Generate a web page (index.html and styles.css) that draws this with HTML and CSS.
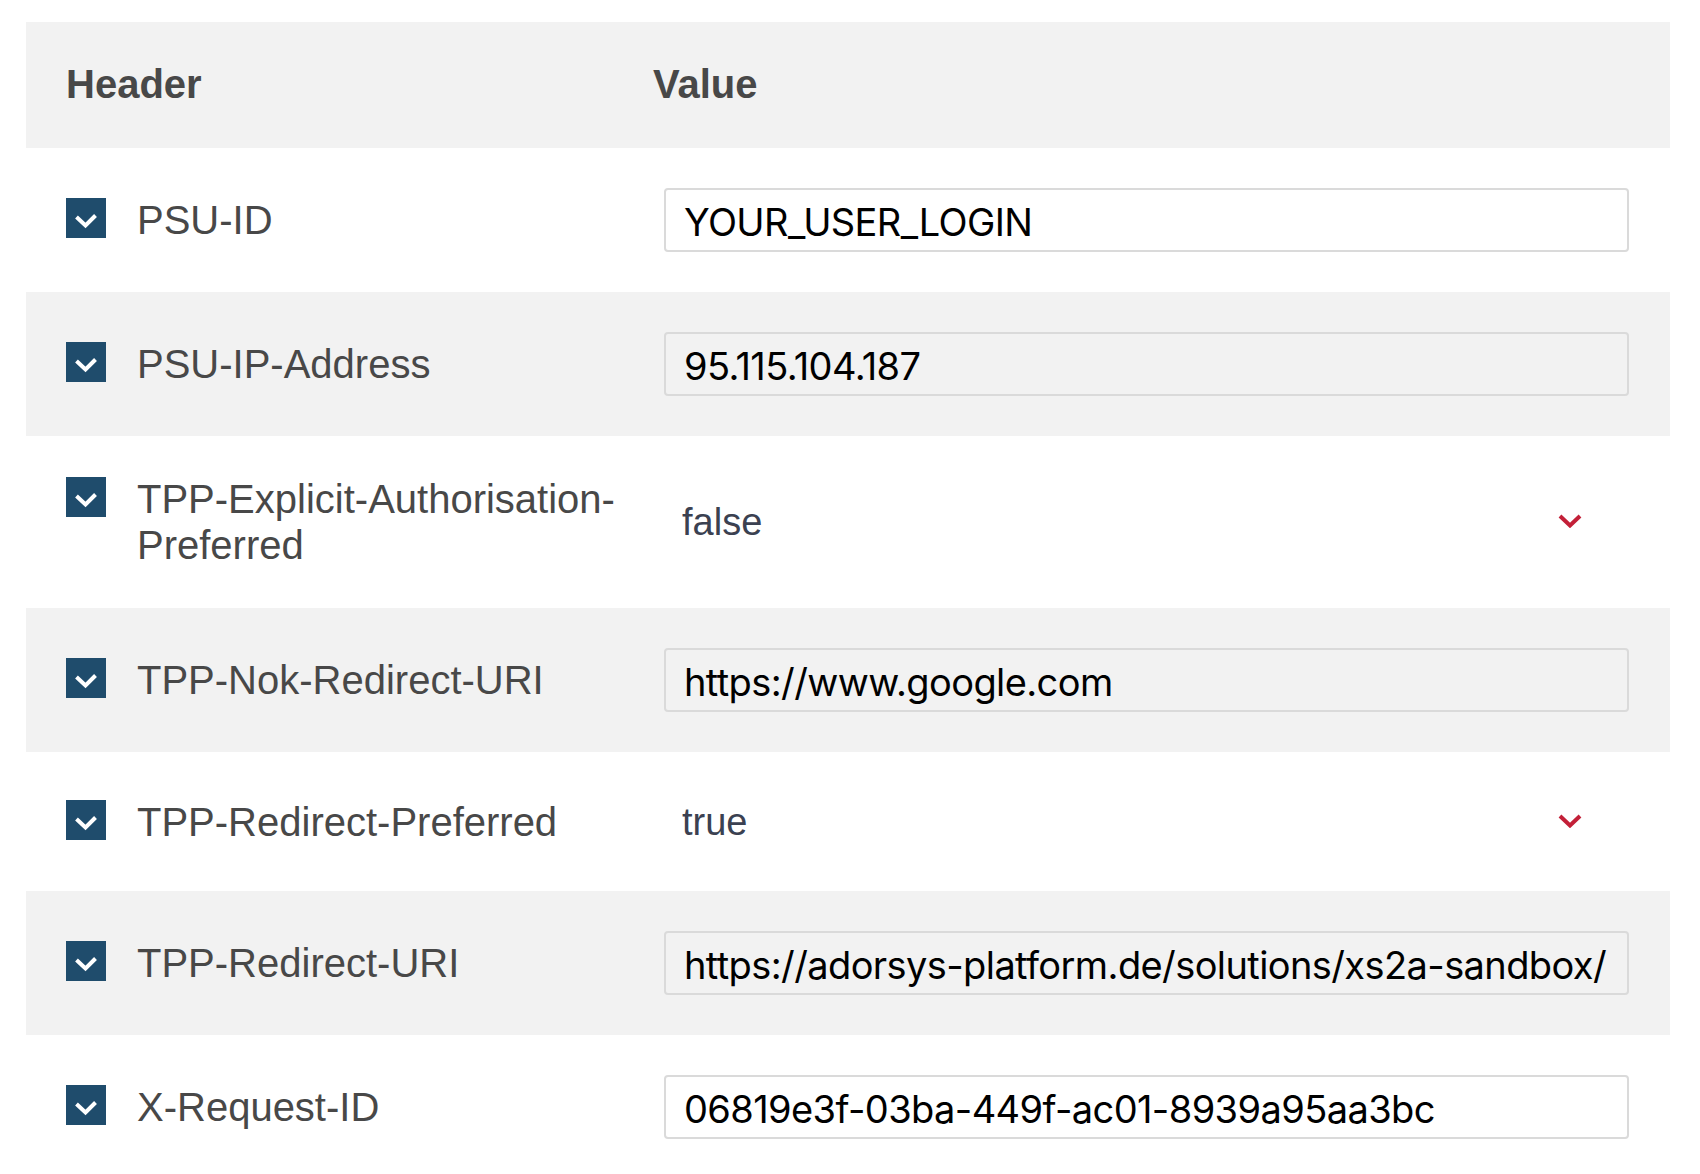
FILE: index.html
```html
<!DOCTYPE html>
<html lang="en">
<head>
<meta charset="utf-8">
<title>Headers</title>
<link rel="stylesheet" href="styles.css">
</head>
<body>
<div class="table">
  <div class="row head">
    <div class="th">Header</div>
    <div class="th th-value">Value</div>
  </div>

  <div class="row">
    <div class="name">
      <span class="cb"><svg viewBox="0 0 40 40" width="40" height="40"><polyline points="10.5,19 19.5,27.5 29.5,17.5" fill="none" stroke="#fff" stroke-width="4"/></svg></span>
      <span class="label">PSU-ID</span>
    </div>
    <div class="val"><input class="text" type="text" value="YOUR_USER_LOGIN"></div>
  </div>

  <div class="row">
    <div class="name">
      <span class="cb"><svg viewBox="0 0 40 40" width="40" height="40"><polyline points="10.5,19 19.5,27.5 29.5,17.5" fill="none" stroke="#fff" stroke-width="4"/></svg></span>
      <span class="label">PSU-IP-Address</span>
    </div>
    <div class="val"><input class="text" type="text" value="95.115.104.187"></div>
  </div>

  <div class="row">
    <div class="name">
      <span class="cb"><svg viewBox="0 0 40 40" width="40" height="40"><polyline points="10.5,19 19.5,27.5 29.5,17.5" fill="none" stroke="#fff" stroke-width="4"/></svg></span>
      <span class="label">TPP-Explicit-Authorisation-Preferred</span>
    </div>
    <div class="val select-wrap">
      <select class="sel"><option>false</option><option>true</option></select>
      <svg class="chev" viewBox="0 0 24 14" width="24" height="14"><polyline points="2,2 12,11.5 22,2" fill="none" stroke="#c32038" stroke-width="4"/></svg>
    </div>
  </div>

  <div class="row">
    <div class="name">
      <span class="cb"><svg viewBox="0 0 40 40" width="40" height="40"><polyline points="10.5,19 19.5,27.5 29.5,17.5" fill="none" stroke="#fff" stroke-width="4"/></svg></span>
      <span class="label">TPP-Nok-Redirect-URI</span>
    </div>
    <div class="val"><input class="text" type="text" value="https://www.google.com"></div>
  </div>

  <div class="row">
    <div class="name">
      <span class="cb"><svg viewBox="0 0 40 40" width="40" height="40"><polyline points="10.5,19 19.5,27.5 29.5,17.5" fill="none" stroke="#fff" stroke-width="4"/></svg></span>
      <span class="label">TPP-Redirect-Preferred</span>
    </div>
    <div class="val select-wrap">
      <select class="sel"><option>true</option><option>false</option></select>
      <svg class="chev" viewBox="0 0 24 14" width="24" height="14"><polyline points="2,2 12,11.5 22,2" fill="none" stroke="#c32038" stroke-width="4"/></svg>
    </div>
  </div>

  <div class="row">
    <div class="name">
      <span class="cb"><svg viewBox="0 0 40 40" width="40" height="40"><polyline points="10.5,19 19.5,27.5 29.5,17.5" fill="none" stroke="#fff" stroke-width="4"/></svg></span>
      <span class="label">TPP-Redirect-URI</span>
    </div>
    <div class="val"><input class="text" type="text" value="https://adorsys-platform.de/solutions/xs2a-sandbox/"></div>
  </div>

  <div class="row">
    <div class="name">
      <span class="cb"><svg viewBox="0 0 40 40" width="40" height="40"><polyline points="10.5,19 19.5,27.5 29.5,17.5" fill="none" stroke="#fff" stroke-width="4"/></svg></span>
      <span class="label">X-Request-ID</span>
    </div>
    <div class="val"><input class="text" type="text" value="06819e3f-03ba-449f-ac01-8939a95aa3bc"></div>
  </div>
</div>
</body>
</html>
```

FILE: styles.css
```css
html, body {
  margin: 0;
  padding: 0;
  background: #fff;
}

body {
  font-family: "Liberation Sans", Arial, Helvetica, sans-serif;
  color: #4a4a4a;
}

.table {
  margin: 22px 30px 0 26px;
}

.row {
  display: grid;
  grid-template-columns: 587px 1fr;
  align-items: center;
  padding: 40px 41px 40px 40px;
}

.row:nth-child(odd) {
  background: #f2f2f2;
}

.row.head {
  height: 126px;
  box-sizing: border-box;
  padding-top: 0;
  padding-bottom: 2px;
}

.th {
  font-size: 40px;
  font-weight: bold;
  color: #484848;
  line-height: 46px;
}

.name {
  display: flex;
  align-items: flex-start;
}

.cb {
  flex: 0 0 40px;
  width: 40px;
  height: 40px;
  margin-top: 1px;
  background: #1f4c6c;
  display: block;
}

.cb svg {
  display: block;
}

.label {
  margin-left: 31px;
  font-size: 40px;
  line-height: 46px;
  color: #484848;
  padding-right: 10px;
}

.val {
  min-width: 0;
}

.text {
  display: block;
  box-sizing: border-box;
  margin-left: 11px;
  width: calc(100% - 11px);
  height: 64px;
  padding: 4px 16px 0 18px;
  border: 2px solid #dadada;
  border-radius: 4px;
  background: transparent;
  font-family: Inter, "Liberation Sans", Arial, sans-serif;
  font-size: 38px;
  letter-spacing: -0.6px;
  color: #000;
  outline: none;
}

.select-wrap {
  position: relative;
}

.sel {
  display: block;
  box-sizing: border-box;
  -webkit-appearance: none;
  appearance: none;
  margin-left: 11px;
  width: calc(100% - 11px);
  height: 59px;
  padding: 0 80px 0 18px;
  border: none;
  background: transparent;
  font-family: "Liberation Sans", Arial, Helvetica, sans-serif;
  font-size: 38px;
  color: #3b4151;
  outline: none;
}

.chev {
  position: absolute;
  right: 47px;
  top: 50%;
  margin-top: -8px;
  pointer-events: none;
}
```
